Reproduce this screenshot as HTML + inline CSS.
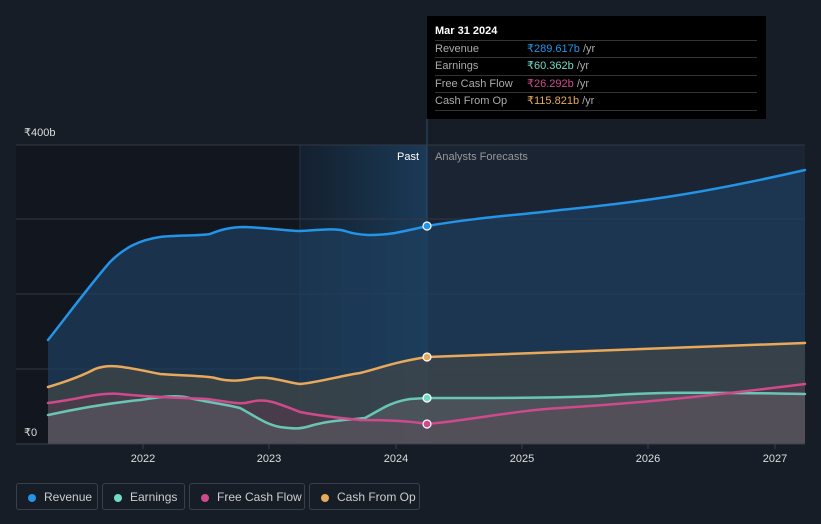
<!DOCTYPE html>
<html><head><meta charset="utf-8"><style>
body{margin:0;width:821px;height:524px;background:#171d27;font-family:"Liberation Sans","DejaVu Sans",sans-serif;overflow:hidden;position:relative}
.tt{position:absolute;left:427px;top:16px;width:339px;height:103px;background:#000;}
.tt .h{position:absolute;left:8px;top:9px;color:#fff;font-size:11px;font-weight:bold}
.tt .r{position:absolute;left:8px;width:322px;border-top:1px solid #333;font-size:11px;color:#aaa;height:17px;line-height:17px}
.tt .r span{position:absolute;left:92px}
.leg{position:absolute;top:483px;height:27px;border:1px solid #3a3f49;border-radius:3px;color:#ccc;font-size:12px;line-height:27px;box-sizing:border-box}
.leg i{position:absolute;left:11px;top:10px;width:8px;height:8px;border-radius:50%}
.leg b{font-weight:normal;position:absolute;left:27px}
</style></head><body>
<svg width="821" height="524" style="position:absolute;left:0;top:0">
<defs>
<linearGradient id="pg" x1="0" x2="1"><stop offset="0" stop-color="#14202e"/><stop offset="1" stop-color="#1a3a57"/></linearGradient>
</defs>
<rect x="16" y="145" width="284" height="299" fill="#12161e"/>
<rect x="300" y="145" width="127" height="299" fill="url(#pg)"/>
<line x1="300" y1="145" x2="300" y2="444" stroke="#22344a"/>
<rect x="427" y="145" width="378" height="299" fill="#1a2433"/>
<line x1="427" y1="119" x2="427" y2="444" stroke="#2a4d6a" stroke-width="1"/>
<g stroke="#323946" stroke-width="1">
<line x1="16" y1="145" x2="805" y2="145"/><line x1="16" y1="219" x2="805" y2="219"/><line x1="16" y1="294" x2="805" y2="294"/><line x1="16" y1="369" x2="805" y2="369"/>
</g>
<path d="M48,340 C70,312 90,285 110,262 C125,247 140,240 160,237 C175,235 200,236 210,234 C220,230 230,227 245,227 C270,228 290,231 300,231 C320,230 335,228 345,231 C360,236 375,236 395,233 C410,230 420,228 427,226 C480,217 520,215 560,210 C640,202 700,194 805,170 L805,444 L48,444Z" fill="#1e3f5e" opacity="0.7"/>
<path d="M48,387 C65,382 80,377 95,369 C110,363 125,367 160,374 C190,376 207,376 215,378 C230,382 240,381 255,378 C270,376 285,382 300,384 C320,382 340,376 360,373 C380,368 395,362 427,357 L805,343 L805,444 L48,444Z" fill="#4a4a45" opacity="0.6"/>
<path d="M48,403 C80,399 100,392 120,394 C160,398 190,398 207,399 C230,402 240,405 250,402 C265,398 275,402 300,412 C320,416 340,418 360,420 C390,420 410,421 427,424 C470,420 520,410 560,408 C640,403 700,397 805,384 L805,444 L48,444Z" fill="#6a3550" opacity="0.35"/>
<path d="M48,415 C80,408 110,403 140,400 C160,397 175,395 185,397 C205,402 225,404 240,408 C255,416 265,424 280,427 C295,429 300,429 310,426 C330,420 350,420 365,418 C380,410 390,402 410,399 L427,398 C500,398 550,398 600,396 C650,392 700,392 805,394 L805,444 L48,444Z" fill="#5b5e66" opacity="0.55"/>
<g fill="none" stroke-width="2.5" stroke-linecap="round">
<path d="M48,340 C70,312 90,285 110,262 C125,247 140,240 160,237 C175,235 200,236 210,234 C220,230 230,227 245,227 C270,228 290,231 300,231 C320,230 335,228 345,231 C360,236 375,236 395,233 C410,230 420,228 427,226 C480,217 520,215 560,210 C640,202 700,194 805,170" stroke="#2394e6"/>
<path d="M48,387 C65,382 80,377 95,369 C110,363 125,367 160,374 C190,376 207,376 215,378 C230,382 240,381 255,378 C270,376 285,382 300,384 C320,382 340,376 360,373 C380,368 395,362 427,357 L805,343" stroke="#e8a95b"/>
<path d="M48,415 C80,408 110,403 140,400 C160,397 175,395 185,397 C205,402 225,404 240,408 C255,416 265,424 280,427 C295,429 300,429 310,426 C330,420 350,420 365,418 C380,410 390,402 410,399 L427,398 C500,398 550,398 600,396 C650,392 700,392 805,394" stroke="#6fdcc6" opacity="0.85"/>
<path d="M48,403 C80,399 100,392 120,394 C160,398 190,398 207,399 C230,402 240,405 250,402 C265,398 275,402 300,412 C320,416 340,418 360,420 C390,420 410,421 427,424 C470,420 520,410 560,408 C640,403 700,397 805,384" stroke="#cf4a8c"/>
</g>
<g stroke="#fff" stroke-width="1.2">
<circle cx="427" cy="226" r="4" fill="#2394e6"/><circle cx="427" cy="357" r="4" fill="#e8a95b"/><circle cx="427" cy="398" r="4" fill="#6fdcc6"/><circle cx="427" cy="424" r="4" fill="#cf4a8c"/>
</g>
<line x1="16" y1="444" x2="805" y2="444" stroke="#3a404b"/>
<g stroke="#3a404b"><line x1="143" y1="444" x2="143" y2="449"/><line x1="269" y1="444" x2="269" y2="449"/><line x1="396" y1="444" x2="396" y2="449"/><line x1="522" y1="444" x2="522" y2="449"/><line x1="648" y1="444" x2="648" y2="449"/><line x1="775" y1="444" x2="775" y2="449"/></g>
<g fill="#ddd" font-size="11" text-anchor="middle" font-family="Liberation Sans,sans-serif">
<text x="143" y="462">2022</text><text x="269" y="462">2023</text><text x="396" y="462">2024</text><text x="522" y="462">2025</text><text x="648" y="462">2026</text><text x="775" y="462">2027</text>
</g>
<text x="24" y="136" fill="#ddd" font-size="11">₹400b</text>
<text x="24" y="436" fill="#ddd" font-size="11">₹0</text>
<text x="419" y="160" fill="#fff" font-size="11" text-anchor="end">Past</text>
<text x="435" y="160" fill="#999" font-size="11">Analysts Forecasts</text>
</svg>
<div class="tt"><div class="h">Mar 31 2024</div>
<div class="r" style="top:24px">Revenue<span><em style="font-style:normal;color:#2394e6">₹289.617b</em> /yr</span></div>
<div class="r" style="top:41px">Earnings<span><em style="font-style:normal;color:#6fdcc6">₹60.362b</em> /yr</span></div>
<div class="r" style="top:59px">Free Cash Flow<span><em style="font-style:normal;color:#cf4a8c">₹26.292b</em> /yr</span></div>
<div class="r" style="top:76px">Cash From Op<span><em style="font-style:normal;color:#e8a95b">₹115.821b</em> /yr</span></div>
<div class="r" style="top:94px;height:0"></div>
</div>
<div class="leg" style="left:16px;width:82px"><i style="background:#2394e6"></i><b>Revenue</b></div>
<div class="leg" style="left:102px;width:83px"><i style="background:#6fdcc6"></i><b>Earnings</b></div>
<div class="leg" style="left:189px;width:116px"><i style="background:#cf4a8c"></i><b>Free Cash Flow</b></div>
<div class="leg" style="left:309px;width:111px"><i style="background:#e8a95b"></i><b>Cash From Op</b></div>
</body></html>
